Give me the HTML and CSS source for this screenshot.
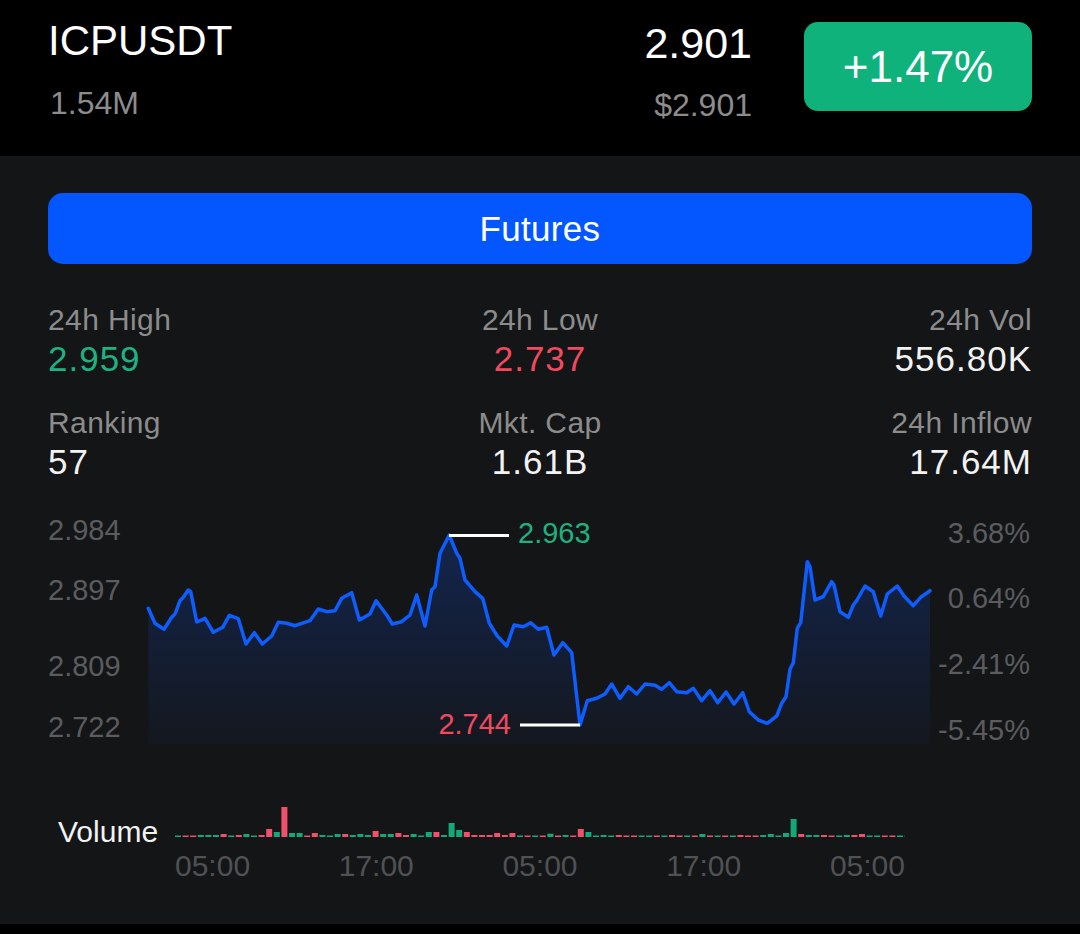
FILE: index.html
```html
<!DOCTYPE html>
<html lang="en">

<head>
  <meta charset="UTF-8">
  <meta name="viewport" content="width=device-width, initial-scale=1.0">
  <title>ICPUSDT</title>
  <link rel="stylesheet" href="styles.css">
</head>

<body>
  <header class="header">
    <div class="header-left">
      <div class="symbol">ICPUSDT</div>
      <div class="sub">1.54M</div>
    </div>
    <div class="price">
      <div class="last">2.901</div>
      <div class="sub">$2.901</div>
    </div>
    <div class="badge">+1.47%</div>
  </header>

  <section class="panel">
    <button class="futures">Futures</button>

    <div class="stats">
      <div class="stat">
        <div class="stat-label">24h High</div>
        <div class="stat-value up">2.959</div>
      </div>
      <div class="stat center">
        <div class="stat-label">24h Low</div>
        <div class="stat-value down">2.737</div>
      </div>
      <div class="stat right">
        <div class="stat-label">24h Vol</div>
        <div class="stat-value">556.80K</div>
      </div>
      <div class="stat">
        <div class="stat-label">Ranking</div>
        <div class="stat-value">57</div>
      </div>
      <div class="stat center">
        <div class="stat-label">Mkt. Cap</div>
        <div class="stat-value">1.61B</div>
      </div>
      <div class="stat right">
        <div class="stat-label">24h Inflow</div>
        <div class="stat-value">17.64M</div>
      </div>
    </div>

    <!-- viewBox uses page coordinates so the traced points drop straight in -->
    <svg class="chart" width="984" height="260" viewBox="48 490 984 260">
      <defs>
        <linearGradient id="area" gradientUnits="userSpaceOnUse" x1="0" y1="535" x2="0" y2="745">
          <stop offset="0" stop-color="#1048c0" stop-opacity="0.32"/>
          <stop offset="1" stop-color="#1048c0" stop-opacity="0.04"/>
        </linearGradient>
      </defs>
      <path id="area-path" fill="url(#area)" d=""/>
      <path id="line-path" fill="none" stroke="#0d5dff" stroke-width="3.5" stroke-linejoin="round" stroke-linecap="round" d=""/>

      <text class="axis" x="48" y="540">2.984</text>
      <text class="axis" x="48" y="600">2.897</text>
      <text class="axis" x="48" y="676">2.809</text>
      <text class="axis" x="48" y="737">2.722</text>

      <text class="axis" x="1030" y="543" text-anchor="end">3.68%</text>
      <text class="axis" x="1030" y="608" text-anchor="end">0.64%</text>
      <text class="axis" x="1030" y="674" text-anchor="end">-2.41%</text>
      <text class="axis" x="1030" y="740" text-anchor="end">-5.45%</text>

      <line x1="449" y1="535.5" x2="509" y2="535.5" stroke="#fff" stroke-width="3"/>
      <text class="mark up" x="518" y="543">2.963</text>
      <line x1="520" y1="725" x2="580" y2="725" stroke="#fff" stroke-width="3"/>
      <text class="mark down" x="511" y="734" text-anchor="end">2.744</text>
    </svg>

    <div class="volume">
      <div class="volume-label">Volume</div>
      <svg id="bars" width="730" height="40" viewBox="175 800 730 40"></svg>
    </div>

    <div class="times">
      <span>05:00</span>
      <span>17:00</span>
      <span>05:00</span>
      <span>17:00</span>
      <span>05:00</span>
    </div>
  </section>

  <script>
    var points = [
      [148.3,608.3],[155,623.3],[164,629.3],[171.7,617.3],[175,614],[180,600.7],[183.3,597.3],[188.3,590],
      [190.7,591.7],[196.7,622],[205,618.3],[213.3,632.3],[222.7,627.3],[229.3,615.3],[238.3,618.7],[246,644],
      [254.3,632.7],[262.3,644],[271.7,636],[278.3,622.3],[286.7,623.3],[295,625.7],[310,620.7],[318.3,609],
      [326.7,611.7],[335,610.7],[341.7,598.3],[351.7,592.7],[359.3,620],[370,614],[376,600.7],[386.7,615],
      [392.3,624],[401.7,621.7],[410,615],[416.7,595],[425,626],[431.7,590],[435,586.7],[440,553.3],
      [449.3,535],[456.7,553.3],[460,558.3],[465,580],[475,591.7],[482.7,598.3],[489.3,623.3],[497.3,636],
      [506.7,646],[514,625],[523.3,626.7],[530.7,622.7],[538.3,629.3],[546.7,627.3],[554,655],[562.7,642.7],
      [571.7,652.7],[580,725],[587.3,700.7],[596.7,698.3],[605,694],[611.7,684],[620,698.3],[628.3,686.7],
      [636.7,694],[645,684],[655,685.3],[661.7,689.3],[669.3,682.7],[676.7,691.7],[686.7,692.7],[693.3,688.3],
      [701.7,700.7],[710,690.7],[717.7,702.7],[726,692],[734,704],[742.7,692.7],[749.3,711.7],[758.3,720],
      [767.3,723.3],[776.7,716],[781.7,703.3],[786,696.7],[790,669.3],[793.3,662.7],[797.3,628.3],[800.7,622.7],
      [807.3,561.7],[810,566.7],[815,600],[823.3,596.7],[831.7,581.7],[834,585],[840,611.7],[848.3,617.3],
      [853.3,605],[856.7,600.7],[865,586],[873.3,591.7],[880.7,616],[887.3,594],[897.3,586],[904,596],
      [913.3,605.7],[920.7,597.3],[930,590.7]
    ]

    // g = up bar, r = down bar, number = height in px
    var volumes = 'g1.5 r1 r1.5 g2 g2 g2 r3 g1 r2 g3 g1 r2 r8 g5 r30 g4 g4 r1 r4 g2 g1 g3 r3 g2 g3 g2 r6 g3 g3 r4 ' +
      'r2 g3 g1 g5 r5 g2 g14 g7 r5 r2 r2 r2 r4 r2 r4 g1 r1 g1 r1 g3.3 r1 g2 r1 r8 g5 g1 g2 g1 r2 r1 ' +
      'r1 g1 g1.5 r1 g1 r2 r1 g1 r1 g3 r1 g1 r1.5 g1.5 r2 r1 r1 g2 g3 g1 g4 g18 r3 g2 g2 r2 r1 g1 ' +
      'g2 r2 r3 g1 g1 r1 r1 g1 g1'

    function drawLine() {
      var d = points.map(function (p, i) {
        return (i ? 'L' : 'M') + p[0] + ',' + p[1]
      }).join(' ')
      document.querySelector('#line-path').setAttribute('d', d)
      document.querySelector('#area-path').setAttribute('d', d + ' L930,744 L148.3,744 Z')
    }

    function drawBars() {
      var svg = document.querySelector('#bars')
      var ns = 'http://www.w3.org/2000/svg'
      volumes.split(' ').forEach(function (item, i) {
        var h = Math.max(parseFloat(item.slice(1)), 1.5)
        var rect = document.createElementNS(ns, 'rect')
        rect.setAttribute('x', 175 + i * 7.6)
        rect.setAttribute('y', 837 - h)
        rect.setAttribute('width', 6)
        rect.setAttribute('height', h)
        rect.setAttribute('class', item[0] === 'g' ? 'bar-up' : 'bar-down')
        svg.appendChild(rect)
      })
    }

    drawLine()
    drawBars()
  </script>
</body>

</html>
```

FILE: styles.css
```css
* {
  margin: 0;
  padding: 0;
}

body {
  width: 1080px;
  background: #000;
  font-family: "Liberation Sans", Arial, sans-serif;
  color: #f2f2f2;
}

.header {
  display: flex;
  align-items: flex-start;
  height: 156px;
  padding: 17px 48px 0;
  box-sizing: border-box;
}

.header-left {
  flex: 1;
  display: flex;
  flex-direction: column;
  gap: 20px;
}

.symbol {
  font-size: 42px;
  line-height: 48px;
  color: #fff;
}

.last {
  font-size: 43px;
  line-height: 48px;
  color: #fff;
}

.sub {
  font-size: 32px;
  line-height: 36px;
  color: #8c8c8c;
}

.header-left .sub {
  padding-left: 2px;
}

.price {
  display: flex;
  flex-direction: column;
  align-items: flex-end;
  gap: 20px;
  margin-top: 2px;
}

.badge {
  display: flex;
  align-items: center;
  justify-content: center;
  width: 228px;
  height: 89px;
  margin: 5px 0 0 52px;
  border-radius: 14px;
  background: #0fb27b;
  color: #fff;
  font-size: 44px;
}

.panel {
  height: 768px;
  box-sizing: border-box;
  padding: 37px 48px 0;
  background: #141517;
}

.futures {
  display: block;
  width: 100%;
  height: 71px;
  border: none;
  outline: none;
  border-radius: 15px;
  background: #0456ff;
  color: #fff;
  font-family: inherit;
  font-size: 35px;
  letter-spacing: 0.3px;
}

.stats {
  display: grid;
  grid-template-columns: repeat(3, 1fr);
  row-gap: 27px;
  margin-top: 39px;
}

.stat.center {
  text-align: center;
}

.stat.right {
  text-align: right;
}

.stat-label {
  font-size: 30px;
  line-height: 34px;
  letter-spacing: 0.4px;
  color: #8c8c8c;
}

.stat-value {
  margin-top: 2px;
  font-size: 35px;
  line-height: 40px;
  letter-spacing: 1px;
  color: #f2f2f2;
}

.up {
  color: #1db27f;
  fill: #1db27f;
}

.down {
  color: #f2495f;
  fill: #f2495f;
}

.chart {
  display: block;
  margin-top: 8px;
}

.axis {
  font-family: "Liberation Sans", Arial, sans-serif;
  font-size: 29px;
  fill: #5b5c5f;
}

.mark {
  font-family: "Liberation Sans", Arial, sans-serif;
  font-size: 29px;
}

.volume {
  display: flex;
  align-items: flex-start;
  margin-top: 50px;
}

.volume-label {
  width: 127px;
  box-sizing: border-box;
  padding-left: 10px;
  margin-top: 15px;
  font-size: 30px;
  line-height: 34px;
  color: #f2f2f2;
}

#bars {
  display: block;
}

.bar-up {
  fill: #14a878;
}

.bar-down {
  fill: #f0506a;
}

.times {
  display: flex;
  justify-content: space-between;
  width: 730px;
  margin-left: 127px;
  font-size: 30px;
  line-height: 34px;
  color: #505154;
}
```
